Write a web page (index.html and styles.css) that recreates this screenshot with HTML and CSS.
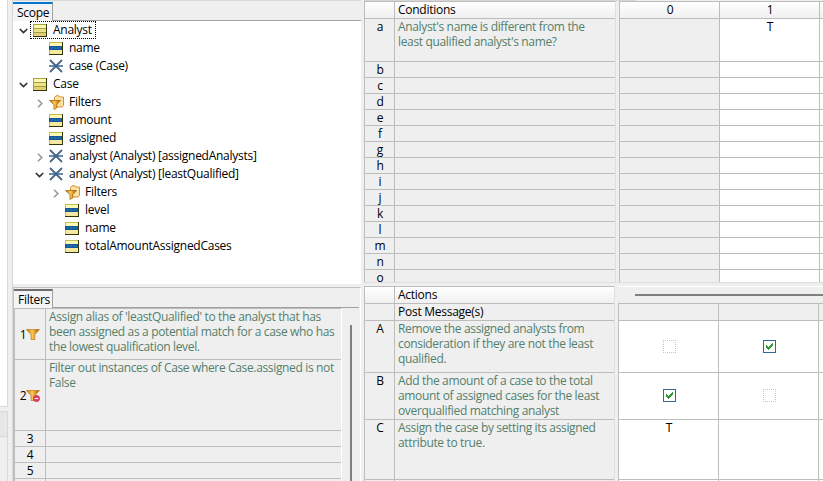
FILE: index.html
```html
<!DOCTYPE html>
<html lang="en">
<head>
<meta charset="utf-8">
<title>Rule editor</title>
<link rel="stylesheet" href="styles.css">
</head>
<body>
<svg class="defs" aria-hidden="true">
  <defs>
    <linearGradient id="gold" x1="0" x2="1"><stop offset="0" stop-color="#b86e0c"/><stop offset=".45" stop-color="#ffca50"/><stop offset="1" stop-color="#965206"/></linearGradient>
    <symbol id="entity" viewBox="0 0 14 13"><rect width="14" height="13" fill="#35350c"/><rect width="13" height="12" fill="#a8a03a"/><rect x="1" y="1" width="12" height="3" fill="#fdf9b0"/><rect x="1" y="5" width="12" height="3" fill="#ede583"/><rect x="1" y="9" width="12" height="3" fill="#e2cf78"/><path d="M0 4.5h13M0 8.5h13" stroke="#a39c42"/></symbol>
    <symbol id="attr" viewBox="0 0 14 13"><rect width="14" height="13" fill="#35350c"/><rect width="13" height="12" fill="#c5bd4c"/><rect x="1" y="1" width="12" height="3" fill="#fbf9b8"/><rect y="4" width="13" height="4" fill="#12599b"/><path d="M2 6h10" stroke="#3b83bd" stroke-dasharray="2 1"/><rect x="1" y="8" width="12" height="4" fill="#f5e9a0"/></symbol>
    <symbol id="assoc" viewBox="0 0 14 14"><path d="M0 7h14" stroke="#6b8aaa" stroke-width="2"/><path d="M1 1l12 12M13 1L1 13" stroke="#4c6883" stroke-width="1.8"/><path d="M5 7h4" stroke="#3f6a94" stroke-width="3"/></symbol>
    <symbol id="folder" viewBox="0 0 16 15"><path d="M5.5 12V2.5L7 .8h3l1 1.2h3.5v8.5L13 12z" fill="#fde0a0" stroke="#d0903c"/><path d="M.5 5.5h11L7.8 9.6v3.2L5 14.5V9.6z" fill="url(#gold)" stroke="#a9660f" stroke-width=".8"/></symbol>
    <symbol id="funnel" viewBox="0 0 14 11"><path d="M.3.5h13.2L8.8 5.6v4.9H5V5.6z" fill="url(#gold)" stroke="#c07a18" stroke-width=".7"/></symbol>
    <symbol id="open" viewBox="0 0 9 6"><path d="M.8 1l3.7 3.6L8.2 1" fill="none" stroke="#333" stroke-width="1.7"/></symbol>
    <symbol id="shut" viewBox="0 0 6 9"><path d="M1 .8l3.8 3.7L1 8.2" fill="none" stroke="#999" stroke-width="1.6"/></symbol>
    <symbol id="tick" viewBox="0 0 7 7" shape-rendering="crispEdges"><path d="M0 2h1v1h1v1h1V3h1V2h1V1h1V0h1v3H6v1H5v1H4v1H3v1H2V6H1V5H0z" fill="#2d9b32"/></symbol>
  </defs>
</svg>
<div class="app">
  <div class="gutter"><div class="g-top"></div><div class="g-gap"></div><div class="g-head"></div><div class="g-body"></div></div>
  <div class="split"></div>
  <div class="left">
    <section class="scope">
      <div class="tabs"><div class="tab active">Scope</div><div class="rest"></div></div>
      <div class="tree">
        <div class="node"><i class="tw"><svg class="dn"><use href="#open"/></svg></i><span class="focus"><svg class="box"><use href="#entity"/></svg><b>Analyst</b></span></div>
        <div class="node l2"><i class="tw"></i><svg class="box"><use href="#attr"/></svg><b>name</b></div>
        <div class="node l2"><i class="tw"></i><svg class="star"><use href="#assoc"/></svg><b>case (Case)</b></div>
        <div class="node"><i class="tw"><svg class="dn"><use href="#open"/></svg></i><svg class="box"><use href="#entity"/></svg><b>Case</b></div>
        <div class="node l2"><i class="tw"><svg class="rt"><use href="#shut"/></svg></i><svg class="fold"><use href="#folder"/></svg><b>Filters</b></div>
        <div class="node l2"><i class="tw"></i><svg class="box"><use href="#attr"/></svg><b>amount</b></div>
        <div class="node l2"><i class="tw"></i><svg class="box"><use href="#attr"/></svg><b>assigned</b></div>
        <div class="node l2"><i class="tw"><svg class="rt"><use href="#shut"/></svg></i><svg class="star"><use href="#assoc"/></svg><b>analyst (Analyst) [assignedAnalysts]</b></div>
        <div class="node l2"><i class="tw"><svg class="dn"><use href="#open"/></svg></i><svg class="star"><use href="#assoc"/></svg><b>analyst (Analyst) [leastQualified]</b></div>
        <div class="node l3"><i class="tw"><svg class="rt"><use href="#shut"/></svg></i><svg class="fold"><use href="#folder"/></svg><b>Filters</b></div>
        <div class="node l3"><i class="tw"></i><svg class="box"><use href="#attr"/></svg><b>level</b></div>
        <div class="node l3"><i class="tw"></i><svg class="box"><use href="#attr"/></svg><b>name</b></div>
        <div class="node l3"><i class="tw"></i><svg class="box"><use href="#attr"/></svg><b>totalAmountAssignedCases</b></div>
      </div>
    </section>
    <section class="filters">
      <div class="tabs"><div class="tab">Filters</div><div class="rest"></div></div>
      <div class="fbody">
        <div class="ftable">
          <div class="num">1<svg class="fun"><use href="#funnel"/></svg></div><div class="txt">Assign alias of 'leastQualified' to the analyst that has<br>been assigned as a potential match for a case who has<br>the lowest qualification level.</div>
          <div class="num">2<span class="mark"><svg class="fun"><use href="#funnel"/></svg><svg class="no" viewBox="0 0 8 8"><circle cx="4" cy="4" r="3.5" fill="#e8436c" stroke="#c42650"/><path d="M2 4h4" stroke="#fff" stroke-width="1.2"/></svg></span></div><div class="txt">Filter out instances of Case where Case.assigned is not<br>False</div>
          <div class="num">3</div><div></div>
          <div class="num">4</div><div></div>
          <div class="num">5</div><div></div>
          <div></div><div></div>
        </div>
        <div class="vbar"><div class="vthumb"></div></div>
      </div>
    </section>
  </div>
  <div class="right">
    <div class="upper">
      <div class="names cond">
        <div class="h"></div><div class="h t">Conditions</div>
        <div>a</div><div class="t green">Analyst's name is different from the<br>least qualified analyst's name?</div>
        <div>b</div><div></div><div>c</div><div></div><div>d</div><div></div><div>e</div><div></div><div>f</div><div></div><div>g</div><div></div><div>h</div><div></div><div>i</div><div></div><div>j</div><div></div><div>k</div><div></div><div>l</div><div></div><div>m</div><div></div><div>n</div><div></div><div>o</div><div></div>
      </div>
      <div class="sash"></div>
      <div class="vals cond">
        <div class="h">0</div><div class="h">1</div><div class="h"></div>
        <div class="dim"></div><div>T</div><div></div>
        <div class="dim"></div><div></div><div></div><div class="dim"></div><div></div><div></div>
        <div class="dim"></div><div></div><div></div><div class="dim"></div><div></div><div></div>
        <div class="dim"></div><div></div><div></div><div class="dim"></div><div></div><div></div>
        <div class="dim"></div><div></div><div></div><div class="dim"></div><div></div><div></div>
        <div class="dim"></div><div></div><div></div><div class="dim"></div><div></div><div></div>
        <div class="dim"></div><div></div><div></div><div class="dim"></div><div></div><div></div>
        <div class="dim"></div><div></div><div></div><div class="dim"></div><div></div><div></div>
      </div>
    </div>
    <div class="lower">
      <div class="names act">
        <div class="h"></div><div class="h t">Actions</div>
        <div></div><div class="t">Post Message(s)</div>
        <div>A</div><div class="t green">Remove the assigned analysts from<br>consideration if they are not the least<br>qualified.</div>
        <div>B</div><div class="t green">Add the amount of a case to the total<br>amount of assigned cases for the least<br>overqualified matching analyst</div>
        <div>C</div><div class="t green">Assign the case by setting its assigned<br>attribute to true.</div>
        <div></div><div></div>
      </div>
      <div class="sash"></div>
      <div class="actvals">
        <div class="hbar"><div class="hthumb"></div></div>
        <div class="vals act">
          <div class="dim"></div><div class="dim"></div><div class="dim"></div>
          <div class="mid"><span class="off"></span></div><div class="mid"><span class="on"><svg><use href="#tick"/></svg></span></div><div></div>
          <div class="mid"><span class="on"><svg><use href="#tick"/></svg></span></div><div class="mid"><span class="off"></span></div><div></div>
          <div>T</div><div></div><div></div>
          <div></div><div></div><div></div>
        </div>
      </div>
    </div>
  </div>
</div>
</body>
</html>
```
FILE: styles.css
```css
* { box-sizing: border-box; }
body { margin: 0; width: 823px; height: 481px; overflow: hidden; background: #efefef; color: #000; font: 12px/15px "Open Sans", "Noto Sans", sans-serif; letter-spacing: -0.26px; }
b, i { font-weight: normal; font-style: normal; }
svg { display: block; flex: none; }
.defs { position: absolute; width: 0; height: 0; }
.app { display: flex; height: 481px; }

.gutter { width: 8px; display: flex; flex-direction: column; flex: none; }
.g-top { height: 407px; background: #fff; border-right: 1px solid #d9d9d9; border-bottom: 1px solid #d9d9d9; }
.g-gap { height: 4px; }
.g-head { height: 26px; background: #e7e7e7; border: solid #d9d9d9; border-width: 1px 1px 1px 0; }
.g-body { flex: 1; border-right: 1px solid #d9d9d9; }
.split { width: 5px; flex: none; border-right: 1px solid #d6d6d6; }

.left { width: 348px; flex: none; display: flex; flex-direction: column; }
.scope { height: 284px; display: flex; flex-direction: column; border-top: 1px solid #dadada; }
.tabs { display: flex; height: 20px; flex: none; }
.tab { width: 40px; padding: 1px 0 0 4px; border-right: 1px solid #a0a0a0; border-top: 2px solid #6d6d6d; background: #f4f4f4; white-space: nowrap; }
.rest { flex: 1; border-bottom: 1px solid #a0a0a0; }
.scope .tabs { padding-top: 1px; }
.scope .tab { border-top-color: #0078d4; }
.tree { flex: 1; background: #fff; }
.node { display: flex; align-items: center; height: 18px; padding-left: 6px; white-space: nowrap; }
.node b { margin-left: 6px; line-height: 17px; height: 18px; }
.l2 { padding-left: 22px; }
.l3 { padding-left: 38px; }
.tw { width: 14px; flex: none; display: flex; align-items: center; }
.dn { width: 9px; height: 6px; margin-top: 1px; }
.rt { width: 6px; height: 9px; margin: 2px 0 0 2px; }
.box { width: 14px; height: 13px; }
.star { width: 14px; height: 14px; }
.fold { width: 16px; height: 15px; margin-right: -2px; }
.focus { display: flex; align-items: center; height: 18px; width: 66px; margin-left: -3px; padding-left: 2px; border: 1px dotted #000; }
.focus b { height: 16px; line-height: 15px; }

.filters { height: 194px; margin-top: 3px; border-top: 1px solid #c0c0c0; border-left: 1px solid #c0c0c0; border-right: 1px solid #fff; }
.filters .tabs { padding-top: 1px; margin-right: 1px; }
.filters .tab { width: 39px; }
.fbody { display: flex; height: 173px; }
.ftable { width: 328px; border-left: 1px solid #bdbdbd; border-right: 1px solid #fff; border-top: 1px solid #bdbdbd; display: grid; grid-template-columns: 31px 1fr; grid-template-rows: 51px 71px 16px 16px 16px 16px; overflow: hidden; }
.ftable > div { border-bottom: 1px solid #bdbdbd; overflow: hidden; }
.num { display: flex; align-items: center; justify-content: center; }
.ftable > div:nth-child(odd) { border-right: 1px solid #bdbdbd; }
.txt, .green { color: #54806b; letter-spacing: -0.35px; }
.txt { padding-left: 3px; white-space: nowrap; }
.fun { width: 14px; height: 11px; }
.mark { position: relative; }
.no { position: absolute; width: 7px; height: 7px; right: 0; top: 5px; }
.vbar { flex: 1; padding: 17px 0 0 8px; }
.vthumb { width: 2px; height: 160px; background: #808080; }

.right { flex: 1; margin-left: 3px; min-width: 0; display: flex; flex-direction: column; }
.upper { display: flex; height: 283px; padding-top: 1px; background: linear-gradient(#d6d6d6, #d6d6d6) 0 0 / 272px 1px no-repeat; border-bottom: 1px solid #dedede; overflow: hidden; }
.names, .vals { display: grid; flex: none; align-content: start; border-top: 1px solid #bdbdbd; border-left: 1px solid #bdbdbd; overflow: hidden; }
.names > div, .vals > div { border-right: 1px solid #bdbdbd; border-bottom: 1px solid #bdbdbd; padding-left: 1px; text-align: center; overflow: hidden; white-space: nowrap; }
.names { grid-template-columns: 30px 1fr; width: 251px; }
.names > div:nth-child(even) { border-right: 0; }
.names > .t { text-align: left; padding-left: 3px; }
.names > .h, .vals > .h { background: linear-gradient(#fff, #f0f0f0); }
.vals { grid-template-columns: 100px 100px 100px; width: 204px; }
.vals > div { background: #fff; }
.vals > .dim { background: #efefef; }
.cond { grid-template-rows: 17px 43px; grid-auto-rows: 16px; }
.sash { width: 4px; flex: none; border-left: 1px solid #e0e0e0; }
.lower { display: flex; height: 195px; margin-top: 3px; }
.lower .names { width: 250px; }
.names.act { grid-template-rows: 17px 17px 52px 47px 60px 20px; }
.actvals { flex: 1; min-width: 0; }
.hbar { height: 17px; border-top: 1px solid #fff; padding: 7px 0 0 17px; }
.hthumb { height: 2px; background: #808080; }
.vals.act { grid-template-rows: 17px 52px 47px 60px 20px; width: 205px; }
.vals > .mid { display: flex; align-items: center; justify-content: center; padding: 0 0 1px 1px; }
.on, .off { width: 13px; height: 13px; display: flex; align-items: center; justify-content: center; }
.on { border: 1px solid #336899; }
.on svg { width: 7px; height: 7px; }
.off { border: 1px dotted #c4c4c4; }
```
